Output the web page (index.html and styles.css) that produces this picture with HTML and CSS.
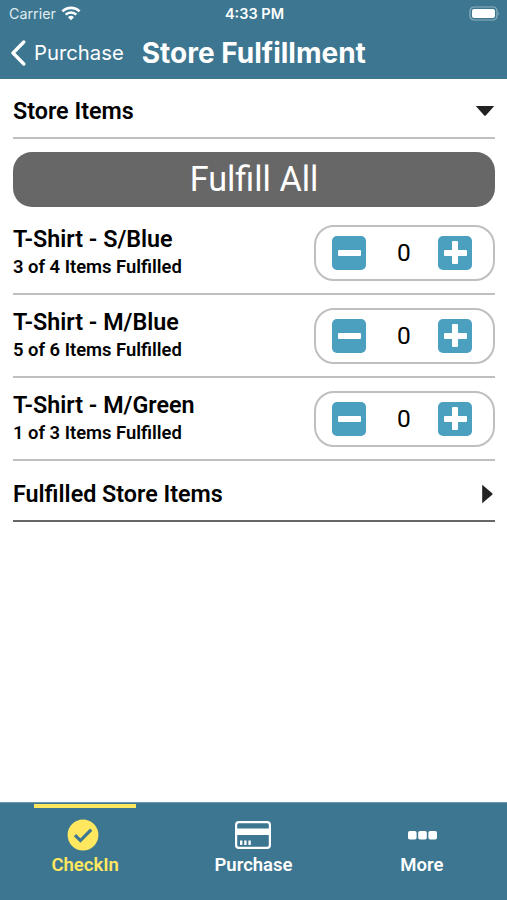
FILE: index.html
```html
<!DOCTYPE html>
<html lang="en">
<head>
    <meta charset="UTF-8">
    <meta name="viewport" content="width=device-width, initial-scale=1.0">
    <title>Store Fulfillment</title>
    <link rel="stylesheet" href="styles.css">
</head>
<body>
    <header class="header">
        <div class="status-bar">
            <div class="carrier">
                <span class="carrier-name">Carrier</span>
                <svg class="wifi" width="20" height="15" viewBox="0 0 20 15">
                    <path d="M1.4 5.4a12.2 12.2 0 0 1 17.2 0M4.7 8.7a7.5 7.5 0 0 1 10.6 0" fill="none" stroke="#fff" stroke-width="2.6"/>
                    <path d="M10 14.2l-3-3a4.4 4.4 0 0 1 6 0z" fill="#fff"/>
                </svg>
            </div>
            <span class="time">4:33 PM</span>
            <svg class="battery" width="31" height="15" viewBox="0 0 31 15">
                <rect x="1" y="1" width="27" height="13" rx="4" fill="none" stroke="#8fb3c3" stroke-width="1.2"/>
                <rect x="3" y="3" width="23" height="9" rx="2" fill="#fff"/>
                <path d="M29.3 5.5q1.5 2 0 4z" fill="#8fb3c3"/>
            </svg>
        </div>
        <nav class="nav-bar">
            <a class="back">
                <svg width="16" height="26" viewBox="0 0 16 26">
                    <path d="M13.8 2L3 13l10.8 11" fill="none" stroke="#fff" stroke-width="3.3" stroke-linecap="round" stroke-linejoin="round"/>
                </svg>
                <span class="back-text">Purchase</span>
            </a>
            <h1 class="title">Store Fulfillment</h1>
        </nav>
    </header>

    <main class="content">
        <div class="section">
            <h2 class="section-title">Store Items</h2>
            <svg width="20" height="12" viewBox="0 0 20 12">
                <path d="M.8 1h18.4L10.8 10.4q-.8.8-1.6 0z" fill="#222"/>
            </svg>
        </div>

        <button class="fulfill-all">Fulfill All</button>

        <div class="item">
            <div class="item-info">
                <div class="item-name">T-Shirt - S/Blue</div>
                <div class="item-count">3 of 4 Items Fulfilled</div>
            </div>
            <div class="stepper">
                <button class="step minus" aria-label="Remove"></button>
                <span class="amount">0</span>
                <button class="step plus" aria-label="Add"></button>
            </div>
        </div>
        <div class="item">
            <div class="item-info">
                <div class="item-name">T-Shirt - M/Blue</div>
                <div class="item-count">5 of 6 Items Fulfilled</div>
            </div>
            <div class="stepper">
                <button class="step minus" aria-label="Remove"></button>
                <span class="amount">0</span>
                <button class="step plus" aria-label="Add"></button>
            </div>
        </div>
        <div class="item">
            <div class="item-info">
                <div class="item-name">T-Shirt - M/Green</div>
                <div class="item-count">1 of 3 Items Fulfilled</div>
            </div>
            <div class="stepper">
                <button class="step minus" aria-label="Remove"></button>
                <span class="amount">0</span>
                <button class="step plus" aria-label="Add"></button>
            </div>
        </div>

        <div class="section section-closed">
            <h2 class="section-title">Fulfilled Store Items</h2>
            <svg width="14" height="20" viewBox="0 0 14 20">
                <path d="M1.2.8v18.4l10-8.4q.8-.8 0-1.6z" fill="#222"/>
            </svg>
        </div>
    </main>

    <footer class="tab-bar">
        <a class="tab tab-active">
            <svg class="tab-icon" width="36" height="32" viewBox="0 0 36 32">
                <circle cx="16" cy="16" r="15.4" fill="#ffe760"/>
                <path d="M8 16.2l5.4 5.4L24.2 10.6" fill="none" stroke="#3d7690" stroke-width="3.2"/>
            </svg>
            <span class="tab-text">CheckIn</span>
        </a>
        <a class="tab">
            <svg class="tab-icon" width="36" height="32" viewBox="0 0 36 32">
                <rect x="1.1" y="3.1" width="33.8" height="25.8" rx="2.8" fill="none" stroke="#fff" stroke-width="2.2"/>
                <path d="M1 9.5h34v6.5H1zM5 21.5h2.4v4.5H5zM9.2 21.5h2.4v4.5H9.2zM13.4 21.5h2.4v4.5h-2.4z" fill="#fff"/>
            </svg>
            <span class="tab-text">Purchase</span>
        </a>
        <a class="tab">
            <svg class="tab-icon" width="30" height="32" viewBox="0 0 30 32">
                <rect x="1" y="12" width="8.6" height="8.6" rx="1.8" fill="#fff"/>
                <rect x="11.2" y="12" width="8.6" height="8.6" rx="1.8" fill="#fff"/>
                <rect x="21.4" y="12" width="8.6" height="8.6" rx="1.8" fill="#fff"/>
            </svg>
            <span class="tab-text">More</span>
        </a>
    </footer>
</body>
</html>
```
FILE: styles.css
```css
* {
    box-sizing: border-box;
}

body {
    margin: 0;
    height: 900px;
    display: flex;
    flex-direction: column;
    background-color: #fff;
    color: #000;
    font-family: Roboto, sans-serif;
}

h1, h2 {
    margin: 0;
}

svg {
    display: block;
    flex: none;
}

.header {
    height: 79px;
    background-color: #3d7690;
    color: #fff;
    font-family: Inter, sans-serif;
}

.status-bar {
    height: 27px;
    padding: 0 7px 0 9px;
    display: grid;
    grid-template-columns: 1fr auto 1fr;
    align-items: center;
    font-size: 14px;
}

.carrier {
    display: flex;
    align-items: center;
    gap: 5px;
    color: #dfebf0;
    font-size: 14.3px;
}

.time {
    font-size: 14.5px;
    font-weight: 600;
}

.battery {
    justify-self: end;
}

.nav-bar {
    height: 52px;
    padding-left: 10px;
    display: flex;
    align-items: center;
    gap: 18px;
}

.back {
    display: flex;
    align-items: center;
    gap: 8px;
    font-size: 20.3px;
}

.back-text {
    padding-bottom: 2px;
}

.title {
    font-size: 28px;
    font-weight: 700;
    white-space: nowrap;
}

.content {
    flex: 1;
    padding: 0 12px 0 13px;
}

.section {
    height: 60px;
    padding-top: 6px;
    display: flex;
    align-items: center;
    justify-content: space-between;
    border-bottom: 2px solid #bfbfbf;
}

.section-closed {
    height: 61px;
    border-bottom-color: #666;
}

.section-title,
.item-name {
    font-size: 23.3px;
    line-height: 28px;
    font-weight: 600;
    white-space: nowrap;
}

.fulfill-all {
    display: block;
    width: 100%;
    height: 55px;
    margin: 13px 0 5px;
    padding: 0 0 2px;
    border: none;
    border-radius: 19px;
    background-color: #676767;
    color: #fff;
    font-family: Roboto, sans-serif;
    font-size: 34.2px;
    font-weight: 400;
}

.item {
    height: 83px;
    display: flex;
    align-items: center;
    justify-content: space-between;
    border-bottom: 2px solid #bfbfbf;
}

.item-info {
    padding-top: 1px;
}

.item-count {
    font-size: 18.4px;
    line-height: 28px;
    font-weight: 600;
    white-space: nowrap;
}

.stepper {
    width: 181px;
    height: 56px;
    padding: 0 21px 0 16px;
    display: flex;
    align-items: center;
    justify-content: space-between;
    border: 2px solid #bfbfbf;
    border-radius: 20px;
}

.step {
    width: 34px;
    height: 34px;
    padding: 0;
    display: grid;
    place-items: center;
    border: none;
    border-radius: 5px;
    background-color: #4b9fbf;
}

.step::before,
.plus::after {
    content: "";
    grid-area: 1 / 1;
    width: 23px;
    height: 6px;
    border-radius: 1px;
    background-color: #fff;
}

.plus::after {
    width: 6px;
    height: 23px;
}

.amount {
    padding-left: 4px;
    font-size: 24.5px;
    line-height: 28px;
}

.tab-bar {
    height: 98px;
    padding: 0 1px;
    display: flex;
    background-color: #3d7690;
    border-top: 1px solid #6f9aae;
    color: #fff;
}

.tab {
    position: relative;
    flex: 1;
    padding-top: 16px;
    display: flex;
    flex-direction: column;
    align-items: center;
    font-size: 18.5px;
    line-height: 28px;
    font-weight: 600;
}

.tab-active {
    color: #ffe760;
}

/* marker over the top edge of the current tab */
.tab-active::before {
    content: "";
    position: absolute;
    top: 1px;
    left: 33px;
    width: 102px;
    height: 4px;
    background-color: #ffe760;
}
```
